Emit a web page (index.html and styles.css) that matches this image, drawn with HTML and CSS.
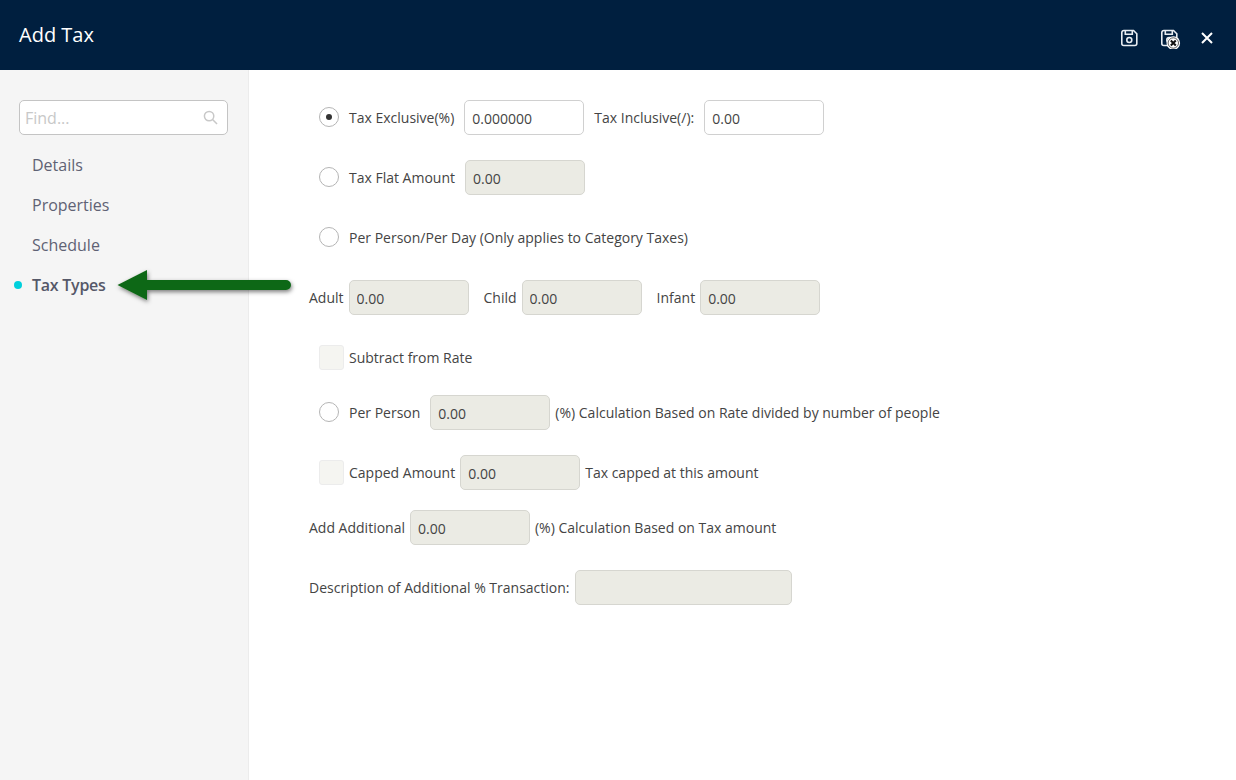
FILE: index.html
```html
<!DOCTYPE html>
<html lang="en">
<head>
<meta charset="utf-8">
<title>Add Tax</title>
<link rel="stylesheet" href="styles.css">
</head>
<body>
<header class="topbar">
  <h1 class="title">Add Tax</h1>
  <div class="actions">
    <svg class="icon icon-save" viewBox="0.7 0 18 18" fill="none" stroke="#e8edf2" stroke-width="1.6">
      <path d="M3 1.5h10.2l3.3 3.3V14.5a2 2 0 0 1-2 2h-11a2 2 0 0 1-2-2v-11a2 2 0 0 1 2-2z"/>
      <path d="M5 1.5v3.8h7V1.5"/>
      <circle cx="9" cy="11" r="2.5"/>
    </svg>
    <svg class="icon icon-savex" viewBox="0.7 0 20 20" fill="none" stroke="#e8edf2" stroke-width="1.6">
      <path d="M3 1.5h10.2l3.3 3.3V14.5a2 2 0 0 1-2 2h-11a2 2 0 0 1-2-2v-11a2 2 0 0 1 2-2z"/>
      <path d="M5 1.5v3.8h7V1.5"/>
      <circle cx="9" cy="11" r="2.5"/>
      <circle cx="13" cy="14" r="6.8" fill="#fff" stroke="none"/>
      <circle cx="13" cy="14" r="5.2" fill="#fff" stroke="#333" stroke-width="0.8"/>
      <path d="M10.5 11.5l5 5M15.5 11.5l-5 5" stroke="#111" stroke-width="2"/>
    </svg>
    <svg class="icon icon-close" viewBox="0 0 12 12" fill="none" stroke="#fff" stroke-width="2">
      <path d="M1 1l10 10M11 1L1 11"/>
    </svg>
  </div>
</header>
<div class="body">
  <aside class="sidebar">
    <div class="search">
      <input class="search-input" type="text" placeholder="Find...">
      <svg class="search-icon" viewBox="0 0 16 16" fill="none" stroke="#c8c8c8" stroke-width="1.6">
        <circle cx="6.5" cy="6.5" r="5"/><path d="M10.2 10.2L15 15"/>
      </svg>
    </div>
    <nav class="nav">
      <a class="nav-item">Details</a>
      <a class="nav-item">Properties</a>
      <a class="nav-item">Schedule</a>
      <a class="nav-item active">Tax Types</a>
    </nav>
  </aside>
  <main class="form">
    <div class="row indent">
      <span class="radio checked"></span>
      <span class="label gap-r10">Tax Exclusive(%)</span>
      <input class="field" value="0.000000">
      <span class="label gap-l10">Tax Inclusive(/):</span>
      <input class="field gap-l10" value="0.00">
    </div>
    <div class="row indent">
      <span class="radio"></span>
      <span class="label gap-r10">Tax Flat Amount</span>
      <input class="field disabled" value="0.00" disabled>
    </div>
    <div class="row indent">
      <span class="radio"></span>
      <span class="label">Per Person/Per Day (Only applies to Category Taxes)</span>
    </div>
    <div class="row">
      <span class="plain">Adult</span>
      <input class="field disabled gap-l5" value="0.00" disabled>
      <span class="plain gap-l15">Child</span>
      <input class="field disabled gap-l5" value="0.00" disabled>
      <span class="plain gap-l15">Infant</span>
      <input class="field disabled gap-l5" value="0.00" disabled>
    </div>
    <div class="row short indent">
      <span class="check"></span>
      <span class="label-c">Subtract from Rate</span>
    </div>
    <div class="row indent">
      <span class="radio"></span>
      <span class="label gap-r10">Per Person</span>
      <input class="field disabled" value="0.00" disabled>
      <span class="plain gap-l5">(%) Calculation Based on Rate divided by number of people</span>
    </div>
    <div class="row indent">
      <span class="check"></span>
      <span class="label-c gap-r5">Capped Amount</span>
      <input class="field disabled" value="0.00" disabled>
      <span class="plain gap-l5">Tax capped at this amount</span>
    </div>
    <div class="row tight">
      <span class="plain">Add Additional</span>
      <input class="field disabled gap-l5" value="0.00" disabled>
      <span class="plain gap-l5">(%) Calculation Based on Tax amount</span>
    </div>
    <div class="row">
      <span class="plain">Description of Additional % Transaction:</span>
      <input class="field disabled wide gap-l5" disabled>
    </div>
  </main>
</div>
<svg class="arrow" viewBox="0 0 190 46" fill="none">
  <defs>
    <filter id="shadow" x="-10%" y="-30%" width="120%" height="170%">
      <feDropShadow dx="1" dy="2" stdDeviation="2.2" flood-color="#000" flood-opacity="0.5"/>
    </filter>
  </defs>
  <g filter="url(#shadow)">
    <path d="M5.5 15L35 0V10H174a5 5 0 0 1 0 10H35V30z" fill="#0e6819"/>
  </g>
</svg>
</body>
</html>
```
FILE: styles.css
```css
* { box-sizing: border-box; }
html, body { margin: 0; height: 100%; }
body {
  font-family: "Open Sans", "Noto Sans", sans-serif;
  font-size: 14px;
  color: #444;
  background: #fff;
  display: flex;
  flex-direction: column;
  height: 780px;
  overflow: hidden;
}
.topbar {
  height: 70px;
  flex: none;
  background: #001f3f;
  display: flex;
  align-items: center;
  justify-content: space-between;
  padding: 0 23px 0 19px;
  color: #fff;
}
.title { margin: 0 0 1px; font-size: 20px; font-weight: 400; line-height: 27px; }
.actions { display: flex; align-items: center; margin-top: 5px; }
.icon { display: block; }
.icon-save { width: 18px; height: 18px; }
.icon-savex { width: 20px; height: 20px; margin-left: 22px; margin-top: 2px; }
.icon-close { width: 12px; height: 12px; margin-left: 20px; }
.body { flex: 1; display: flex; min-height: 0; }
.sidebar {
  width: 249px;
  flex: none;
  background: #f5f5f5;
  border-right: 1px solid #ececec;
  padding: 30px 20px 0 19px;
}
.search { position: relative; height: 35px; }
.search-input {
  width: 100%;
  height: 35px;
  border: 1px solid #c4c4c4;
  border-radius: 5px;
  background: #fff;
  padding: 0 30px 0 5px;
  font: 16px "Open Sans", sans-serif;
  outline: none;
}
.search-input::placeholder { color: #c8c8c8; opacity: 1; }
.search-icon { position: absolute; right: 10px; top: 10px; width: 15px; height: 15px; }
.nav { margin-top: 10px; display: flex; flex-direction: column; }
.nav-item {
  height: 40px;
  line-height: 40px;
  font-size: 16px;
  color: #5f6274;
  padding-left: 13px;
  position: relative;
}
.nav-item.active { font-weight: 600; color: #555868; letter-spacing: -0.25px; }
.nav-item.active::before {
  content: "";
  position: absolute;
  left: -5px;
  top: 16px;
  width: 8px;
  height: 8px;
  border-radius: 50%;
  background: #00d0dc;
}
.form {
  flex: 1;
  padding: 30px 0 0 60px;
  display: flex;
  flex-direction: column;
  gap: 25px;
}
.row { display: flex; align-items: center; height: 35px; }
.row.short { height: 25px; margin-top: 5px; }
.row.tight { margin-top: -5px; }
.indent { padding-left: 10px; }
.radio {
  width: 20px;
  height: 20px;
  border: 1px solid #b5b5b5;
  border-radius: 50%;
  background: #fff;
  flex: none;
  position: relative;
  margin: -1px 10px 0 0;
}
.radio.checked::after {
  content: "";
  position: absolute;
  left: 6px;
  top: 6px;
  width: 6px;
  height: 6px;
  border-radius: 50%;
  background: #333;
}
.check {
  width: 25px;
  height: 25px;
  background: #f5f5f1;
  border: 1px solid #ececec;
  border-radius: 3px;
  flex: none;
  margin-right: 5px;
}
.label, .label-c, .plain { white-space: nowrap; line-height: 20px; }
.field {
  width: 120px;
  height: 35px;
  flex: none;
  border: 1px solid #d0d0d0;
  border-radius: 5px;
  background: #fff;
  color: #444;
  padding: 2px 7px 0;
  font: 14px "Open Sans", sans-serif;
  outline: none;
}
.field.disabled { background: #ebebe4; color: #444; border-color: #d6d6d0; opacity: 1; -webkit-text-fill-color: #444; }
.field.wide { width: 217px; }
.gap-r10 { margin-right: 10px; }
.gap-r5 { margin-right: 5px; }
.gap-l5 { margin-left: 5px; }
.gap-l10 { margin-left: 10px; }
.gap-l15 { margin-left: 15px; }
.arrow {
  position: absolute;
  left: 112px;
  top: 270px;
  width: 190px;
  height: 46px;
  overflow: visible;
}
```
